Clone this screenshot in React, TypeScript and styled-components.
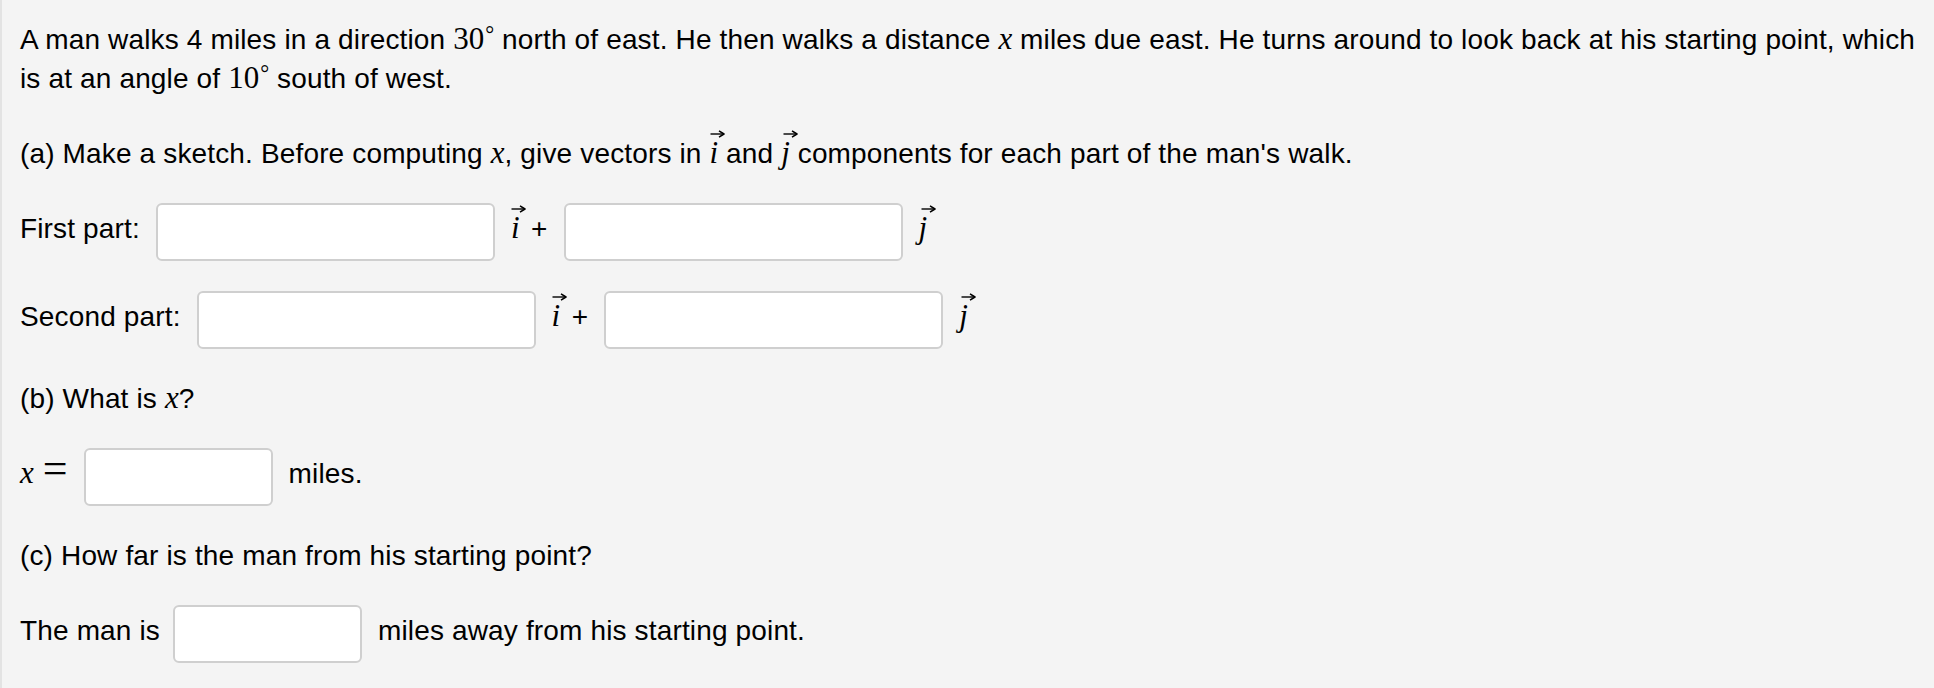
import React from 'react';
import styled, { createGlobalStyle } from 'styled-components';

const GlobalStyle = createGlobalStyle`
  html,
  body {
    margin: 0;
    padding: 0;
    background-color: #f4f4f4;
    overflow: hidden;
  }

  body {
    font-family: 'Liberation Sans', Arial, sans-serif;
    font-size: 28px;
    letter-spacing: 0.15px;
    color: #000;
  }
`;

const Problem = styled.main`
  display: flex;
  flex-direction: column;
  gap: 30px;

  min-height: 100vh;
  box-sizing: border-box;
  padding: 20px 0 0 18px;
  border-left: 2px solid #e3e3e3;
`;

const Para = styled.p`
  margin: 0;
  line-height: 39px;
  white-space: nowrap;
`;

const Intro = styled(Para)`
  margin-bottom: 6px;
`;

const AnswerRow = styled.div`
  display: flex;
  align-items: flex-start;
  gap: 16px;
  height: 58px;
`;

const RowText = styled.span<{ $pull?: number }>`
  margin-top: 6px;
  margin-right: ${(p) => -(p.$pull ?? 0)}px;
  line-height: 39px;
  white-space: nowrap;
`;

const AnswerBox = styled.input<{ $wide?: boolean }>`
  width: ${(p) => (p.$wide ? 339 : 189)}px;
  height: 58px;
  box-sizing: border-box;
  margin: 0;
  padding: 0 10px;

  border: 2px solid #cfcfcf;
  border-radius: 6px;
  background-color: #fff;
  outline: none;

  font-family: inherit;
  font-size: 24px;
`;

const Plus = styled.span`
  margin-left: 11.5px;
`;

/* inline TeX-ish math */
const M = styled.span`
  font-family: 'Liberation Serif', 'Times New Roman', serif;
  font-size: 31px;
  line-height: 1;
  letter-spacing: 0;
`;

const Var = styled(M)`
  font-style: italic;
`;

const Deg = styled.span`
  font-size: 0.72em;
  vertical-align: 0.3em;
  line-height: 0;
  margin-left: 1px;
`;

const Eq = styled.span`
  display: inline-block;
  margin-left: 9px;
  font-size: 44px;
  line-height: 0;
`;

const VecWrap = styled.span<{ $shift: number }>`
  position: relative;
  display: inline-block;
  font-family: 'Liberation Serif', 'Times New Roman', serif;
  font-size: 31px;
  font-style: italic;
  line-height: 1;
  letter-spacing: 0;

  svg {
    position: absolute;
    top: -8px;
    left: ${(p) => p.$shift}px;
  }
`;

const Vec = ({ letter }: { letter: 'i' | 'j' }) => (
  <VecWrap $shift={letter === 'i' ? 0 : 2}>
    <svg width="15" height="10" viewBox="0 0 15 10" fill="none">
      <path d="M0.5 5H13" stroke="#000" strokeWidth="1.4" />
      <path d="M9 1.8L14 5L9 8.2" stroke="#000" strokeWidth="1.5" strokeLinejoin="round" />
    </svg>
    {letter}
  </VecWrap>
);

export default function App() {
  return (
    <>
      <GlobalStyle />
      <Problem>
        <Intro>
          A man walks 4 miles in a direction{' '}
          <M>
            30<Deg>°</Deg>
          </M>{' '}
          north of east. He then walks a distance <Var>x</Var> miles due east. He turns around to
          look back at his starting point, which
          <br />
          is at an angle of{' '}
          <M>
            10<Deg>°</Deg>
          </M>{' '}
          south of west.
        </Intro>

        <Para>
          (a) Make a sketch. Before computing <Var>x</Var>, give vectors in <Vec letter="i" /> and{' '}
          <Vec letter="j" /> components for each part of the man's walk.
        </Para>

        <AnswerRow>
          <RowText>First part:</RowText>
          <AnswerBox $wide type="text" />
          <RowText>
            <Vec letter="i" />
            <Plus>+</Plus>
          </RowText>
          <AnswerBox $wide type="text" />
          <RowText>
            <Vec letter="j" />
          </RowText>
        </AnswerRow>

        <AnswerRow>
          <RowText>Second part:</RowText>
          <AnswerBox $wide type="text" />
          <RowText>
            <Vec letter="i" />
            <Plus>+</Plus>
          </RowText>
          <AnswerBox $wide type="text" />
          <RowText>
            <Vec letter="j" />
          </RowText>
        </AnswerRow>

        <Para>
          (b) What is <Var>x</Var>?
        </Para>

        <AnswerRow>
          <RowText>
            <Var>x</Var>
            <M>
              <Eq>=</Eq>
            </M>
          </RowText>
          <AnswerBox type="text" />
          <RowText>miles.</RowText>
        </AnswerRow>

        <Para>(c) How far is the man from his starting point?</Para>

        <AnswerRow>
          <RowText $pull={3}>The man is</RowText>
          <AnswerBox type="text" />
          <RowText>miles away from his starting point.</RowText>
        </AnswerRow>
      </Problem>
    </>
  );
}
